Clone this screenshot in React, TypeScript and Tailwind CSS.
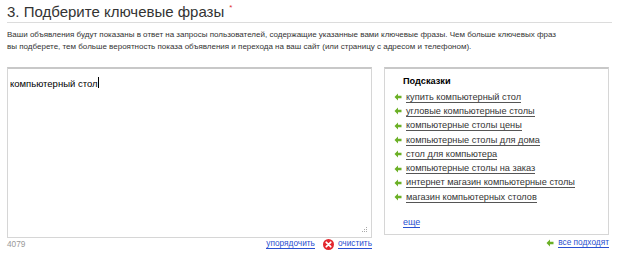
import React from "react";

const hints = [
  "купить компьютерный стол",
  "угловые компьютерные столы",
  "компьютерные столы цены",
  "компьютерные столы для дома",
  "стол для компьютера",
  "компьютерные столы на заказ",
  "интернет магазин компьютерные столы",
  "магазин компьютерных столов",
];

function Arrow() {
  return (
    <svg width="8" height="8" viewBox="0 0 8 8" className="shrink-0">
      <path d="M4 0.5 L0.5 4 L4 7.5 L4 5.2 L7.5 5.2 L7.5 2.8 L4 2.8 Z" fill="#6bb026" />
    </svg>
  );
}

function ClearIcon() {
  return (
    <svg width="11" height="11" viewBox="0 0 11 11" className="shrink-0">
      <circle cx="5.5" cy="5.5" r="5.5" fill="#e3262d" />
      <path d="M3.3 3.3 L7.7 7.7 M7.7 3.3 L3.3 7.7" stroke="#fff" strokeWidth="1.8" strokeLinecap="round" />
    </svg>
  );
}

function Grip() {
  return (
    <svg width="8" height="8" viewBox="0 0 8 8" className="absolute right-[3px] bottom-[3px]">
      <rect x="6" y="1" width="1" height="1" fill="#aaa" />
      <rect x="6" y="3" width="1" height="1" fill="#aaa" />
      <rect x="6" y="5" width="1" height="1" fill="#aaa" />
      <rect x="4" y="3" width="1" height="1" fill="#aaa" />
      <rect x="4" y="5" width="1" height="1" fill="#aaa" />
      <rect x="2" y="5" width="1" height="1" fill="#aaa" />
    </svg>
  );
}

export default function App() {
  return (
    <div className="w-[624px] h-[259px] bg-white overflow-hidden font-['Liberation_Sans',Arial,sans-serif] text-[#333]">
      <div className="pl-[7px] pr-[12px] pt-[3px]">
        <div className="flex items-start border-b border-[#dcdcdc] h-[20px]">
          <h1 className="text-[15px] leading-[17px] text-[#333]">3. Подберите ключевые фразы</h1>
          <span className="text-[#e03030] text-[8px] leading-[8px] ml-[5px] mt-[1px]">*</span>
        </div>
        <p className="text-[8px] leading-[12px] mt-[6px] text-[#333]">
          Ваши объявления будут показаны в ответ на запросы пользователей, содержащие указанные вами ключевые фразы. Чем больше ключевых фраз
          <br />
          вы подберете, тем больше вероятность показа объявления и перехода на ваш сайт (или страницу с адресом и телефоном).
        </p>
      </div>

      <div className="flex pl-[7px] mt-[14px] gap-[12px]">
        <div className="w-[365px] flex flex-col">
          <div className="relative h-[171px] border border-[#d6d6d6] border-t-2 border-t-[#c8c8c8] px-[2px] pt-[1px]">
            <span className="text-[9.5px] leading-[13px] text-black">компьютерный стол</span>
            <span className="inline-block w-px h-[11px] bg-black align-middle" />
            <Grip />
          </div>
          <div className="flex items-center text-[8.3px] leading-[11px] h-[12px]">
            <span className="text-[#999]">4079</span>
            <span className="ml-auto text-[#2a4fd0] border-b border-[#2a4fd0] leading-[9px]">упорядочить</span>
            <span className="ml-[8px] mr-[4px]">
              <ClearIcon />
            </span>
            <span className="text-[#2a4fd0] border-b border-[#2a4fd0] leading-[9px]">очистить</span>
          </div>
        </div>

        <div className="w-[225px] flex flex-col">
          <div className="h-[168px] border border-[#d6d6d6] border-t-2 border-t-[#c8c8c8] pl-[9px] pt-[6px]">
            <div className="pl-[9px] text-[9.2px] leading-[12px] font-bold text-black">Подсказки</div>
            <ul className="mt-[3px] flex flex-col">
              {hints.map((h) => (
                <li key={h} className="flex items-center gap-[4px] h-[14.3px]">
                  <Arrow />
                  <span className="text-[9.2px] leading-[10px] text-[#333] border-b border-[#555]">{h}</span>
                </li>
              ))}
            </ul>
            <div className="pl-[9px] mt-[13px] text-[9px] leading-[10px]">
              <span className="text-[#2a4fd0] border-b border-[#2a4fd0]">еще</span>
            </div>
          </div>
          <div className="flex items-center justify-end gap-[4px] mt-[3px] text-[8.3px]">
            <Arrow />
            <span className="text-[#2a4fd0] border-b border-[#2a4fd0] leading-[9px]">все подходят</span>
          </div>
        </div>
      </div>
    </div>
  );
}
